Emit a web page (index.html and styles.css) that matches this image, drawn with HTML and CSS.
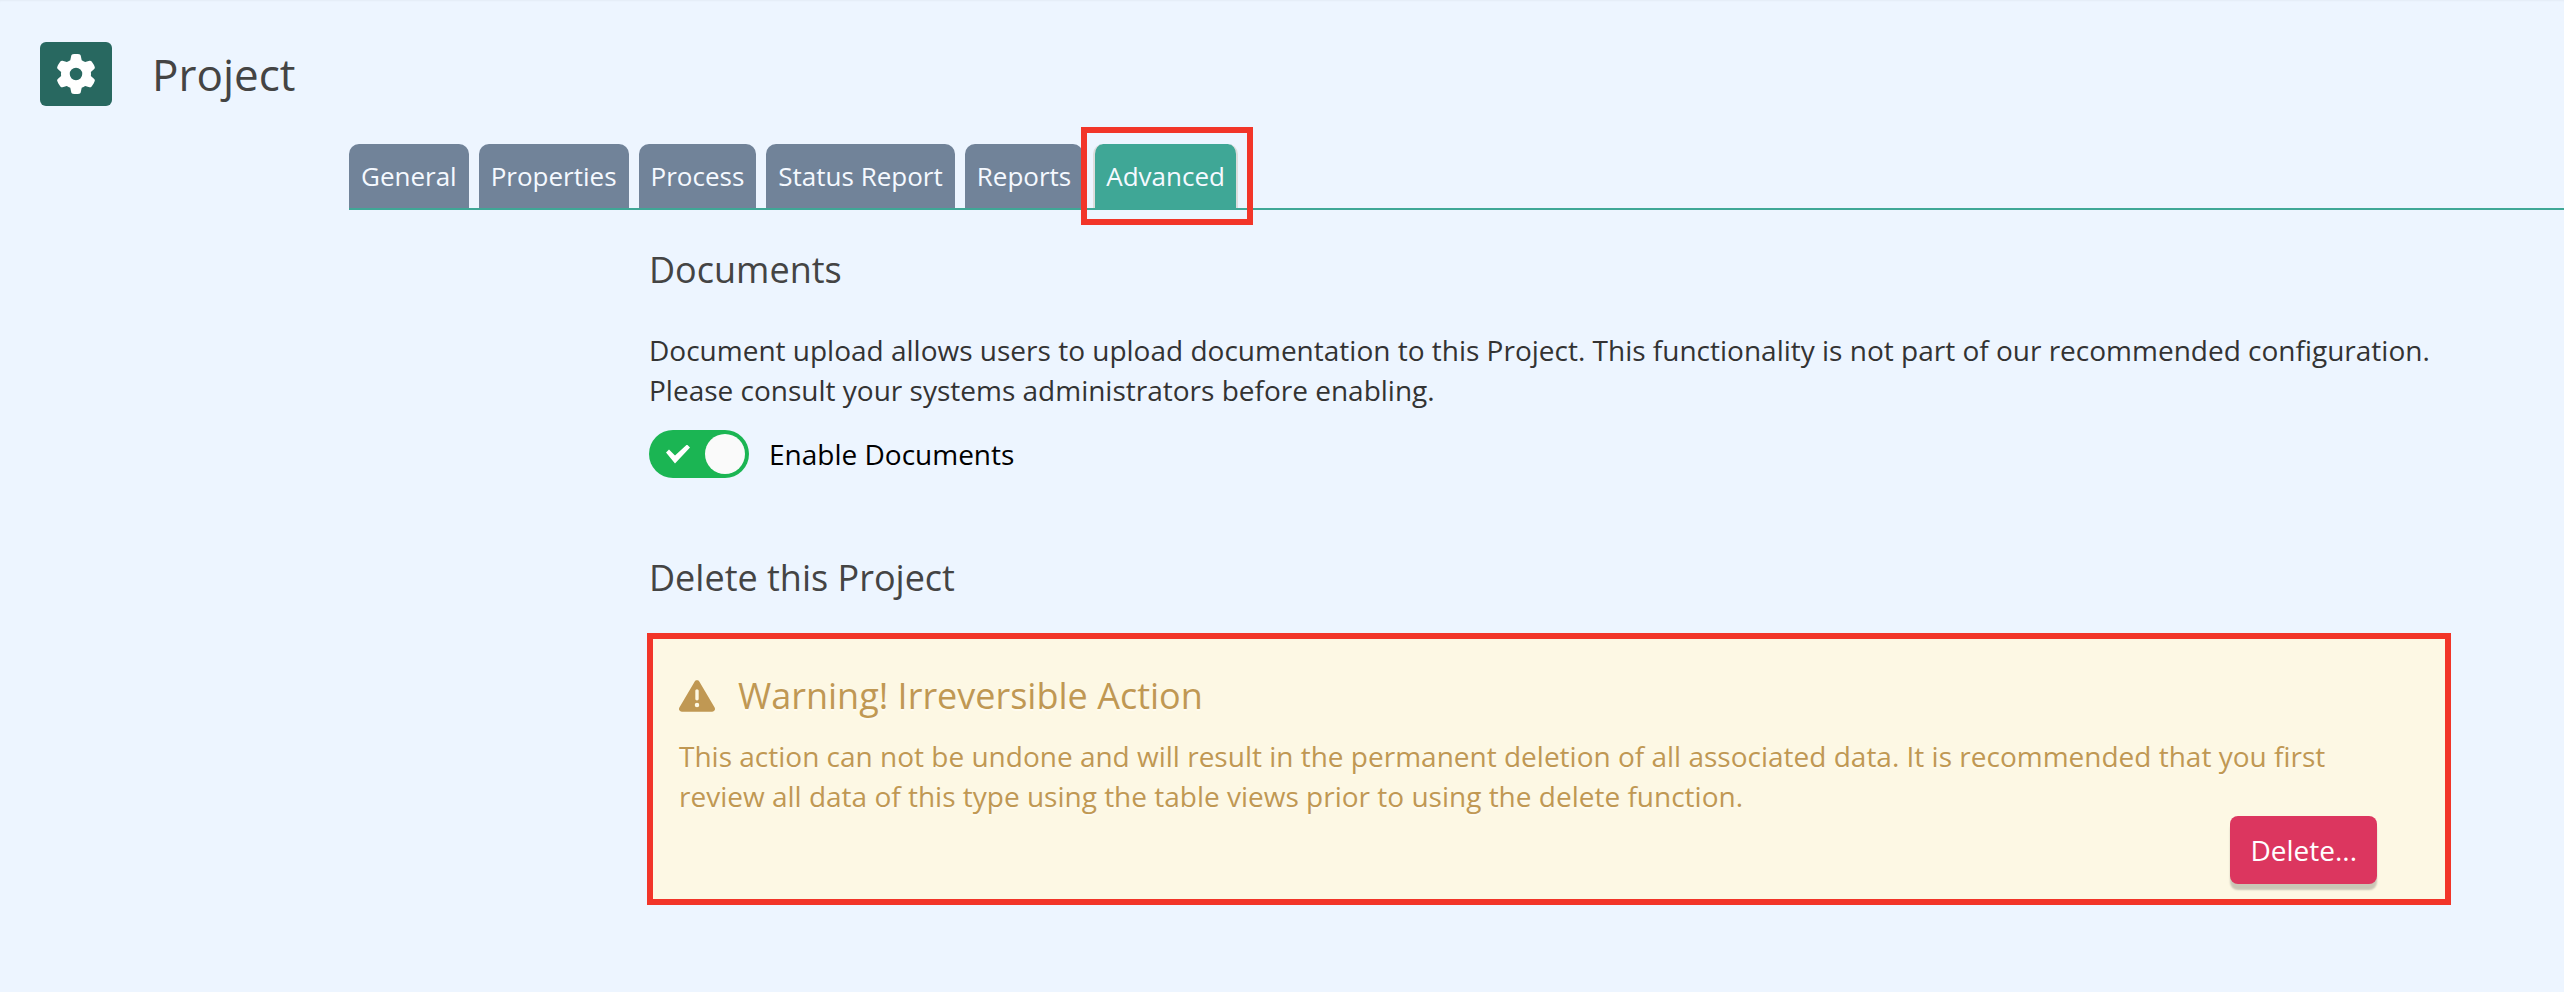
FILE: index.html
```
<!DOCTYPE html>
<html lang="en">
<head>
    <meta charset="UTF-8">
    <meta name="viewport" content="width=device-width, initial-scale=1.0">
    <title>Project</title>
    <link rel="stylesheet" href="styles.css">
</head>
<body>

    <header class="page-header">
        <span class="page-icon">
            <svg viewBox="0 0 512 512" width="40" height="40" aria-hidden="true"><path fill="currentColor" d="M495.9 166.6c3.2 8.7 .5 18.4-6.4 24.6l-43.3 39.4c1.1 8.3 1.7 16.8 1.7 25.4s-.6 17.1-1.7 25.4l43.3 39.4c6.9 6.2 9.6 15.9 6.4 24.6c-4.4 11.9-9.7 23.3-15.8 34.3l-4.7 8.1c-6.6 11-14 21.4-22.1 31.2c-5.9 7.2-15.7 9.6-24.5 6.8l-55.7-17.7c-13.4 10.3-28.2 18.9-44 25.4l-12.5 57.1c-2 9.1-9 16.3-18.2 17.8c-13.8 2.3-28 3.5-42.5 3.5s-28.7-1.2-42.5-3.5c-9.2-1.5-16.2-8.7-18.2-17.8l-12.5-57.1c-15.8-6.5-30.6-15.1-44-25.4L83.1 425.9c-8.8 2.8-18.6 .3-24.5-6.8c-8.1-9.8-15.5-20.2-22.1-31.2l-4.7-8.1c-6.1-11-11.4-22.4-15.8-34.3c-3.2-8.7-.5-18.4 6.4-24.6l43.3-39.4C64.6 273.1 64 264.6 64 256s.6-17.1 1.7-25.4L22.4 191.2c-6.9-6.2-9.6-15.9-6.4-24.6c4.4-11.9 9.7-23.3 15.8-34.3l4.7-8.1c6.6-11 14-21.4 22.1-31.2c5.9-7.2 15.7-9.6 24.5-6.8l55.7 17.7c13.4-10.3 28.2-18.9 44-25.4l12.5-57.1c2-9.1 9-16.3 18.2-17.8C227.3 1.2 241.5 0 256 0s28.7 1.2 42.5 3.5c9.2 1.5 16.2 8.7 18.2 17.8l12.5 57.1c15.8 6.5 30.6 15.1 44 25.4l55.7-17.7c8.8-2.8 18.6-.3 24.5 6.8c8.1 9.8 15.5 20.2 22.1 31.2l4.7 8.1c6.1 11 11.4 22.4 15.8 34.3zM256 336a80 80 0 1 0 0-160 80 80 0 1 0 0 160z"/></svg>
        </span>
        <h1>Project</h1>
    </header>

    <main class="settings">
        <nav class="tabs">
            <a href="#general">General</a>
            <a href="#properties">Properties</a>
            <a href="#process">Process</a>
            <a href="#status-report">Status Report</a>
            <a href="#reports">Reports</a>
            <a href="#advanced" class="active" aria-current="page">Advanced</a>
        </nav>

        <div class="content">
            <section>
                <h2>Documents</h2>
                <p class="help">Document upload allows users to upload documentation to this Project. This functionality is not part of our recommended configuration. Please consult your systems administrators before enabling.</p>
                <label class="toggle">
                    <input type="checkbox" checked>
                    Enable Documents
                </label>
            </section>

            <section class="danger-zone">
                <h2>Delete this Project</h2>
                <div class="alert">
                    <h2>
                        <svg viewBox="0 0 512 512" width="36" height="36" aria-hidden="true"><path fill="currentColor" d="M256 32c14.2 0 27.3 7.5 34.5 19.8l216 368c7.3 12.4 7.3 27.7 .2 40.1S486.3 480 472 480H40c-14.3 0-27.6-7.7-34.7-20.1s-7-27.8 .2-40.1l216-368C228.7 39.5 241.8 32 256 32zm0 128c-13.3 0-24 10.7-24 24V296c0 13.3 10.7 24 24 24s24-10.7 24-24V184c0-13.3-10.7-24-24-24zm32 224a32 32 0 1 0 -64 0 32 32 0 1 0 64 0z"/></svg>
                        Warning! Irreversible Action
                    </h2>
                    <p>This action can not be undone and will result in the permanent deletion of all associated data. It is recommended that you first review all data of this type using the table views prior to using the delete function.</p>
                    <button type="button">Delete...</button>
                </div>
            </section>
        </div>
    </main>

</body>
</html>
```
FILE: styles.css
```
* {
    box-sizing: border-box;
}

body {
    margin: 0;
    background-color: #edf5ff;
    color: #333;
    font-family: "Open Sans", sans-serif;
    font-size: 28px;
    line-height: 40px;
}

h1,
h2,
p {
    margin: 0;
}

h1,
h2 {
    color: #444;
    font-weight: 400;
}

h1 {
    font-size: 44px;
    line-height: 60px;
}

h2 {
    font-size: 36px;
    line-height: 50px;
}

.page-header {
    display: flex;
    align-items: center;
    gap: 40px;
    padding: 42px 40px 38px;
    box-shadow: inset 0 2px 2px -1px rgba(0, 0, 0, 0.04);
}

.page-icon {
    display: flex;
    align-items: center;
    justify-content: center;
    width: 72px;
    height: 64px;
    border-radius: 6px;
    background-color: #286860;
    color: #fff;
}

.settings {
    padding-left: 349px;
}

/* Tabs */
.tabs {
    display: flex;
    gap: 10px;
    border-bottom: 2px solid #3fa796;
}

.tabs a {
    position: relative;
    padding: 12px;
    border-radius: 10px 10px 0 0;
    background-color: #718399;
    color: #f5f9ff;
    font-size: 26px;
    text-decoration: none;
}

.tabs .active {
    border: solid #ddd;
    border-width: 0 2px;
    padding: 12px 11px;
    background-color: #3fa796;
}

/* red frame around the current tab */
.tabs .active::after {
    content: "";
    position: absolute;
    inset: -17px -17px -17px -14px;
    border: 6px solid #f23529;
}

/* Content */
.content {
    padding: 35px 113px 87px 300px;
}

.help {
    margin: 35px 0 20px;
}

.toggle {
    display: flex;
    align-items: center;
    gap: 20px;
    color: #000;
}

.toggle input {
    appearance: none;
    display: flex;
    align-items: center;
    justify-content: space-between;
    width: 100px;
    height: 48px;
    margin: 0;
    padding: 0 4px 0 17px;
    border-radius: 24px;
    background-color: #1bb553;
    cursor: pointer;
}

.toggle input::before {
    content: "";
    width: 24px;
    height: 19px;
    background-color: #fff;
    clip-path: polygon(0 8px, 3px 5px, 9px 11px, 21px 0, 24px 3px, 9px 19px);
}

.toggle input::after {
    content: "";
    width: 40px;
    height: 40px;
    border-radius: 50%;
    background-color: #fafafa;
}

.toggle input:not(:checked) {
    flex-direction: row-reverse;
    background-color: #999;
}

.danger-zone {
    margin-top: 75px;
}

.alert {
    display: flex;
    flex-direction: column;
    margin: 30px 0 0 -2px;
    padding: 32px 68px 15px 26px;
    border: 6px solid #f23529;
    background-color: #fdf8e4;
    color: #c09853;
    text-shadow: 0 2px 0 rgba(255, 255, 255, 0.5);
}

.alert h2 {
    display: flex;
    align-items: center;
    gap: 23px;
    margin-bottom: 15px;
    color: inherit;
}

.alert button {
    align-self: flex-end;
    padding: 14px 20px;
    border: 0;
    border-radius: 8px;
    background-color: #dc365f;
    box-shadow: 0 6px 2px rgba(0, 0, 0, 0.2);
    color: #fff;
    font: inherit;
    cursor: pointer;
}

.alert button:hover {
    background-color: #c42c52;
}
```
